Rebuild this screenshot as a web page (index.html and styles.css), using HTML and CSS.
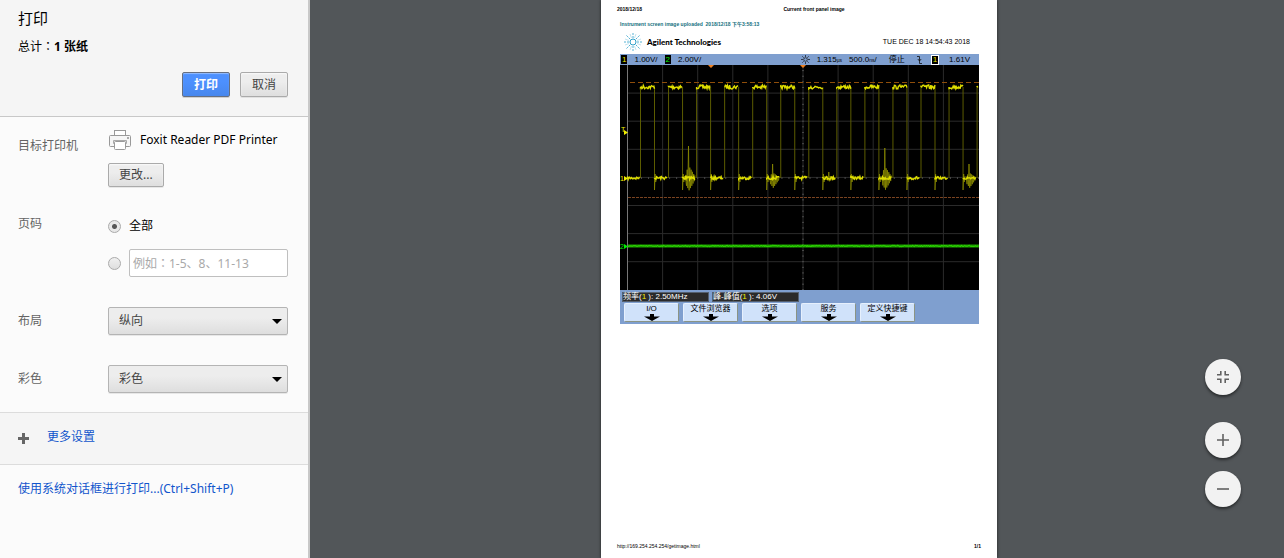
FILE: index.html
```html
<!DOCTYPE html>
<html lang="zh-CN">
<head>
<meta charset="utf-8">
<title>打印</title>
<link rel="stylesheet" href="styles.css">
</head>
<body>
<form class="sidebar">
  <header class="summary">
    <h1 class="title">打印</h1>
    <p class="total">总计<span lang="zh-TW">：</span><b>1 张纸</b></p>
    <div class="actions">
      <button class="btn btn-primary" type="button">打印</button>
      <button class="btn" type="button">取消</button>
    </div>
  </header>
  <div class="settings">
    <section class="row">
      <h2 class="label label-printer">目标打印机</h2>
      <div class="printer">
        <div class="printer-name">
          <svg class="printer-icon" width="24" height="22" viewBox="0 0 24 22">
            <rect x="6.500" y="1.500" width="11" height="6" fill="#fff" stroke="#999"/>
            <rect x="1.500" y="6.500" width="21" height="11" rx="1" fill="#f6f6f6" stroke="#999"/>
            <rect x="19" y="8" width="2" height="2" fill="#aaa"/>
            <path d="M5.500 11.500h13v3h-13z" fill="#eee" stroke="#aaa"/>
            <rect x="6.500" y="12.500" width="11" height="8" rx="1" fill="#fff" stroke="#999"/>
          </svg>
          <span>Foxit Reader PDF Printer</span>
        </div>
        <button class="btn btn-change" type="button">更改...</button>
      </div>
    </section>
    <section class="row">
      <h2 class="label label-pages">页码</h2>
      <div class="pages">
        <label class="choice"><input class="radio" type="radio" name="pages" checked>全部</label>
        <div class="choice">
          <input class="radio" type="radio" name="pages" aria-label="自定义页码">
          <input class="range" lang="ja" type="text" placeholder="例如：1-5、8、11-13" aria-label="页码范围">
        </div>
      </div>
    </section>
    <section class="row">
      <label class="label label-select" for="layout">布局</label>
      <div class="select-wrap"><select class="select" id="layout"><option>纵向</option><option>横向</option></select></div>
    </section>
    <section class="row">
      <label class="label label-select" for="color">彩色</label>
      <div class="select-wrap"><select class="select" id="color"><option>彩色</option><option>黑白</option></select></div>
    </section>
  </div>
  <div class="more">
    <svg width="11" height="11" viewBox="0 0 11 11"><path d="M4 0h3v4h4v3H7v4H4V7H0V4h4z" fill="#666"/></svg>
    <a class="link link-more" href="#more">更多设置</a>
  </div>
  <div class="system"><a class="link" href="#system">使用系统对话框进行打印...(Ctrl+Shift+P)</a></div>
</form>

<main class="preview">
  <article class="paper">
    <header class="paper-head"><span>2018/12/18</span><span>Current front panel image</span><span></span></header>
    <div class="paper-body">
      <p class="uploaded">Instrument screen image uploaded&nbsp; 2018/12/18 下午3:58:13</p>
      <div class="brand">
        <svg width="20" height="18" viewBox="0 0 20 18" fill="none" stroke="#2b9fc9">
          <circle cx="10" cy="9" r="3"/>
          <g stroke-width=".8" stroke-dasharray="2 1"><path d="M10 5V0M10 13v5M6 9H0M14 9h6M7 6L3 2M13 6l4-4M7 12l-4 4M13 12l4 4"/></g>
          <g stroke-width=".3"><path d="M8.500 5L7 1M11.500 5L13 1M8.500 13L7 17M11.500 13l1.500 4M6 7.500L2 6M6 10.500L2 12M14 7.500L18 6M14 10.500l4 1.500"/></g>
        </svg>
        <strong class="brand-name">Agilent Technologies</strong>
        <time class="stamp">TUE DEC 18 14:54:43 2018</time>
      </div>
      <div class="scope">
        <div class="status">
          <span class="chan chan-1">1</span><span>1.00V/</span>
          <span class="chan chan-2">2</span><span>2.00V/</span>
          <svg class="sun" width="9" height="9" viewBox="0 0 9 9" fill="none" stroke="#111" stroke-width=".7"><circle cx="4.500" cy="4.500" r="1.800"/><path d="M4.500 0v2M4.500 7v2M0 4.500h2M7 4.500h2M1.300 1.300l1.400 1.400M6.300 6.300l1.400 1.400M1.300 7.700l1.400-1.400M6.300 2.700l1.400-1.400"/></svg>
          <span>1.315<small class="unit">µs</small></span>
          <span>500.0<small class="unit">ns</small>/</span>
          <span class="state">停止</span>
          <svg class="edge" width="5" height="8" viewBox="0 0 5 8" fill="none" stroke="#111" stroke-width=".8"><path d="M0 .5h2.500v7H5M.8 3l1.700 2 1.700-2"/></svg>
          <span class="chan chan-trigger">1</span><span>1.61V</span>
        </div>
        <svg class="plot" id="plot" viewBox="0 0 359 225"></svg>
        <div class="panel">
          <div class="measures">
            <span class="measure">频率(<i class="num">1</i> ): 2.50MHz</span>
            <span class="measure">峰-峰值(<i class="num">1</i> ): 4.06V</span>
          </div>
          <div class="keys">
            <button class="key" type="button">I/O<svg class="arrow" viewBox="0 0 16 7"><path d="M6 0h4v2.500h6L8 7 0 2.500h6z"/></svg></button>
            <button class="key" type="button">文件浏览器<svg class="arrow" viewBox="0 0 16 7"><path d="M6 0h4v2.500h6L8 7 0 2.500h6z"/></svg></button>
            <button class="key" type="button">选项<svg class="arrow" viewBox="0 0 16 7"><path d="M6 0h4v2.500h6L8 7 0 2.500h6z"/></svg></button>
            <button class="key" type="button">服务<svg class="arrow" viewBox="0 0 16 7"><path d="M6 0h4v2.500h6L8 7 0 2.500h6z"/></svg></button>
            <button class="key" type="button">定义快捷键<svg class="arrow" viewBox="0 0 16 7"><path d="M6 0h4v2.500h6L8 7 0 2.500h6z"/></svg></button>
          </div>
        </div>
      </div>
    </div>
    <footer class="paper-foot"><span>http://169.254.254.254/getimage.html</span><b>1/1</b></footer>
  </article>
  <div class="zoom">
    <button class="fab fab-fit" type="button" aria-label="适合页面"><svg width="14" height="14" viewBox="0 0 14 14" fill="none" stroke="#616161" stroke-width="1.600"><path d="M1 4.800h3.800V1M9.200 1v3.800H13M1 9.200h3.800V13M9.200 13V9.200H13"/></svg></button>
    <button class="fab" type="button" aria-label="放大"><svg width="14" height="14" viewBox="0 0 14 14" stroke="#616161" stroke-width="1.600"><path d="M1 7h12M7 1v12"/></svg></button>
    <button class="fab" type="button" aria-label="缩小"><svg width="14" height="14" viewBox="0 0 14 14" stroke="#616161" stroke-width="1.600"><path d="M1 7h12"/></svg></button>
  </div>
</main>
<script src="plot.js"></script>
</body>
</html>
```

FILE: styles.css
```css
* { box-sizing: border-box; }

body {
  margin: 0;
  min-height: 100vh;
  display: flex;
  background: #525659;
  color: #000;
  font: 12px/18px "Noto Sans", "Noto Sans CJK SC", sans-serif;
}

h1, h2, p { margin: 0; font-weight: normal; }
button, input, select { font: inherit; }
svg { display: block; }

/* Sidebar */
.sidebar {
  flex: 0 0 310px;
  min-width: 0;
  background: #fbfbfb;
  border-right: 2px solid #c8c8c8;
}
.summary {
  padding: 8px 20px 19px 18px;
  background: #f5f5f5;
  border-bottom: 1px solid #c8c8c8;
}
.title { font-size: 15px; line-height: 20px; }
.total { margin-top: 10px; }
.total [lang] { font-family: "Noto Sans CJK TC", sans-serif; line-height: 1; }
.actions { display: flex; justify-content: flex-end; gap: 10px; margin-top: 16px; }
.btn {
  min-width: 48px;
  height: 25px;
  padding: 0 10px;
  color: #444;
  background: linear-gradient(#ededed 38%, #dedede);
  border: 1px solid #aaa;
  border-radius: 2px;
  box-shadow: 0 1px 0 rgba(0, 0, 0, .08), inset 0 1px 2px rgba(255, 255, 255, .75);
}
.btn-primary {
  color: #fff;
  font-weight: bold;
  background: linear-gradient(#4d90fe 38%, #4787ed);
  border-color: #666f80;
  box-shadow: 0 1px 0 rgba(0, 0, 0, .15), inset 0 1px 1px rgba(255, 255, 255, .4);
}
.settings {
  display: grid;
  gap: 30px;
  padding: 12px 20px 19px 18px;
}
.row { display: grid; grid-template-columns: 90px minmax(0, 1fr); }
.label { color: #646464; font-size: 12px; line-height: 18px; }
.label-printer { padding-top: 8px; }
.label-pages { margin-top: -2px; }
.label-select { padding-top: 5px; }
.printer-name { display: flex; align-items: center; gap: 8px; height: 22px; white-space: nowrap; }
.btn-change { margin-top: 12px; height: 24px; display: block; }
.pages { display: grid; grid-template-columns: minmax(0, 1fr); gap: 14px; }
.choice { display: flex; align-items: center; gap: 8px; }
.radio {
  appearance: none;
  flex: none;
  width: 13px;
  height: 13px;
  margin: 0;
  border: 1px solid #aaa;
  border-radius: 50%;
  background: linear-gradient(#f0f0f0, #dedede);
}
.radio:checked { background: radial-gradient(circle, #555 0 2px, #e8e8e8 3px); }
.range {
  flex: 1;
  width: 0;
  min-width: 0;
  height: 28px;
  padding: 0 3px;
  border: 1px solid #bfbfbf;
  border-radius: 2px;
  background: #fff;
  font-family: "Noto Sans", "Noto Sans CJK JP", sans-serif;
}
.range::placeholder { color: #a9a9a9; }
.select-wrap { position: relative; }
.select-wrap::after {
  content: "";
  position: absolute;
  right: 6px;
  top: 12px;
  border: 5px solid transparent;
  border-top-color: #000;
  border-bottom: 0;
  pointer-events: none;
}
.select {
  appearance: none;
  display: block;
  width: 100%;
  height: 28px;
  padding: 0 20px 0 10px;
  color: #444;
  background: linear-gradient(#ededed 38%, #dedede);
  border: 1px solid #b4b4b4;
  border-radius: 2px;
  box-shadow: 0 1px 0 rgba(0, 0, 0, .08);
}
.more {
  display: flex;
  align-items: center;
  gap: 18px;
  height: 53px;
  padding: 0 18px;
  background: #f5f5f5;
  border: solid #dcdcdc;
  border-width: 1px 0;
}
.system { padding: 15px 18px; }
.link { color: #15c; text-decoration: none; }
.link-more { padding-bottom: 3px; }

/* Preview */
.preview {
  position: relative;
  flex: 1;
  display: flex;
  justify-content: center;
  padding-left: 4px;
}
.paper {
  flex: 0 0 396px;
  display: flex;
  flex-direction: column;
  padding: 5px 16px 8px;
  background: #fff;
  box-shadow: 0 0 3px rgba(0, 0, 0, .6);
  font: 5px/8px "Liberation Sans", "Noto Sans CJK SC", sans-serif;
}
.paper-head { display: grid; grid-template-columns: 1fr auto 1fr; font-weight: bold; }
.paper-head span:nth-child(2) { padding-left: 30px; }
.paper-body { padding: 7px 2px 0 3px; }
.uploaded { font-weight: bold; color: #14707e; }
.brand { display: flex; align-items: center; height: 26px; padding: 2px 9px 0 3px; }
.brand-name { margin-left: 4px; font-size: 8px; font-family: Lato, "Liberation Sans", sans-serif; font-weight: 900; }
.stamp { margin-left: auto; font-size: 7px; }
.scope { background: #7f9fcf; }
.status {
  display: flex;
  align-items: center;
  gap: 7px;
  height: 11px;
  padding: 0 9px 0 1px;
  font-size: 8px;
  line-height: 9px;
  white-space: nowrap;
}
.chan { padding: 0 1px; background: #000; }
.chan-1 { color: #e6e600; }
.chan-2 { color: #0e0; }
.chan-trigger { border: 1px solid #fff; color: #e6e600; line-height: 8px; margin-right: 3px; }
.sun { margin-left: auto; }
.state { margin: 0 5px; }
.edge { margin-right: 2px; }
.unit { font-size: 5px; }
.plot { width: 100%; height: auto; background: #000; }
.mark { font-size: 7px; }
.panel { padding: 2px 4px 2px 2px; }
.measures { display: flex; gap: 3px; }
.measure {
  width: 87px;
  height: 10px;
  background: #2b2b2b;
  border: 1px solid #55606f;
  color: #fff;
  font-size: 8px;
  line-height: 8px;
  white-space: nowrap;
}
.num { color: #ee0; font-style: normal; }
.keys { display: flex; gap: 4px; padding: 1px 0 0 2px; }
.key {
  width: 55px;
  height: 19px;
  padding: 0;
  background: #d0e2fa;
  border: 1px solid #e6f0fd;
  border-right-color: #8b9484;
  border-bottom-color: #8b9484;
  border-radius: 2px;
  color: #000;
  font-size: 8px;
  line-height: 10px;
}
.arrow { width: 16px; height: 7px; margin: 0 auto; }
.paper-foot { display: flex; justify-content: space-between; margin-top: auto; }

.zoom {
  position: absolute;
  right: 43px;
  bottom: 51px;
  display: grid;
  gap: 13px;
}
.fab {
  display: grid;
  place-items: center;
  width: 36px;
  height: 36px;
  padding: 0;
  border: 0;
  border-radius: 50%;
  background: #f2f2f2;
  box-shadow: 0 2px 3px rgba(0, 0, 0, .5);
}
.fab-fit { margin-bottom: 14px; }
```

FILE: plot.js
```js
const plot = document.getElementById('plot');
const parts = [];
let seed = 7;
const noise = () => {
  seed = (seed * 16807) % 2147483647;
  return seed / 2147483647 - 0.5;
};
const path = (d, stroke, width = 1, extra = '') =>
  parts.push(`<path d="${d}" fill="none" stroke="${stroke}" stroke-width="${width}" ${extra}/>`);

// Graticule
const left = 7.5, stepX = 35.1, stepY = 28.1;
let grid = '', ticks = '';
for (let i = 1; i < 10; i++) grid += `M${left + i * stepX} 0V225`;
for (let i = 1; i < 8; i++) grid += `M${left} ${i * stepY}H359`;
for (let y = 0; y < 225; y += stepY / 5) ticks += `M182 ${y}h2`;
for (let x = left; x < 359; x += stepX / 5) ticks += `M${x} 112v2`;
path(grid, '#2b2b2b');
path(ticks, '#4a4a4a');
path(`M${left} 0V225`, '#777');
path('M10 17.500H359', '#8f4e0a', 1, 'stroke-dasharray="5 3"');
path('M8 132.500H359', '#7a4320', 1, 'stroke-dasharray="3 1"');

// Channel 1: square wave with ringing bursts, keyed by low-segment index
const high = 22, low = 113, half = 14, period = 28.05;
const bursts = { 1: [32, 19], 4: [14, 15], 6: [6, 5], 8: [30, 18], 11: [14, 15] };
const level = (x0, x1, y, amp) => {
  let d = `M${x0} ${y}`;
  for (let x = x0; x <= x1; x += 0.7) d += `L${x.toFixed(1)} ${(y + noise() * amp).toFixed(1)}`;
  return d;
};
let edges = '', flats = level(left, 20, low, 3), rings = '';
for (let k = 0; k < 13; k++) {
  const x = 20.500 + k * period;
  edges += `M${x} ${low}V${high}`;
  flats += level(x, Math.min(x + half, 358), high, 4);
  if (x + half > 359) continue;
  const f = x + half;
  edges += `M${f} ${high}V125`;
  rings += `M${f} 125L${f + 0.6} 109L${f + 1.2} 117L${f + 2} 111`;
  flats += level(f, f + half - 1, low, 3);
  if (bursts[k]) {
    const [up, down] = bursts[k];
    rings += `M${f + 3} ${low}`;
    for (let n = 0; n < 14; n++) {
      const peak = n === 3 ? 1 : Math.max(0.15, 0.65 - Math.abs(n - 4) * 0.06);
      const size = (n % 2 ? -up * (n === 3 ? 1 : 0.55) : down) * peak;
      rings += `L${(f + 4 + n * 0.65).toFixed(1)} ${(low + size).toFixed(1)}`;
    }
  }
}
path(edges, '#5c5c00');
path(rings, '#8c8c00', 0.8);
path(flats, '#dede00', 1.4);

// Channel 2
path('M8 181H359', '#1d9e00', 3);
path(level(8, 358, 181, 1.500), '#30e000', 1);

// Level and time markers
parts.push('<path d="M88 0h6l-3 3zM180 0h6l-3 3z" fill="#f08020"/>');
parts.push('<path d="M4 65l4 2.500-4 2.500zM4 111l4 2.500-4 2.500z" fill="#ee0"/><path d="M4 179l4 2.500-4 2.500z" fill="#0e0"/>');
parts.push('<text class="mark" x="1" y="67" fill="#ee0">T</text><text class="mark" x="0" y="116" fill="#ee0">1</text><text class="mark" x="0" y="184" fill="#0e0">2</text>');
plot.innerHTML = parts.join('');
```
